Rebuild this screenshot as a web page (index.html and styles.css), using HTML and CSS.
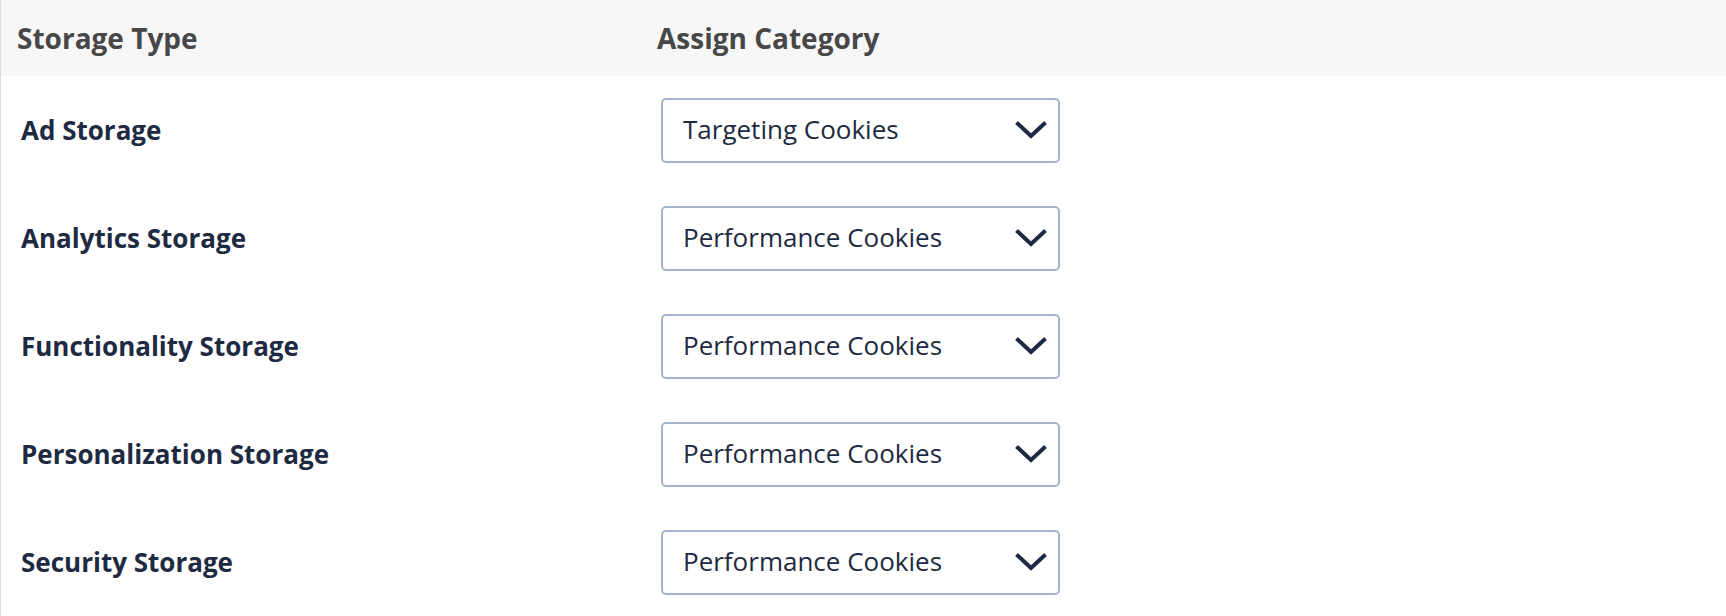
FILE: index.html
```html
<!DOCTYPE html>
<html lang="en">
<head>
    <meta charset="UTF-8">
    <meta name="viewport" content="width=device-width, initial-scale=1.0">
    <title>Storage Categories</title>
    <link rel="stylesheet" href="styles.css">
</head>
<body>
    <div class="storage-table">
        <!-- Header -->
        <div class="row head">
            <div class="cell">Storage Type</div>
            <div class="cell">Assign Category</div>
        </div>

        <div class="row">
            <div class="cell label">Ad Storage</div>
            <div class="cell">
                <div class="select">
                    <span>Targeting Cookies</span>
                    <svg width="34" height="19" viewBox="0 0 34 19"><polyline points="2.5,2.5 17,16 31.5,2.5" fill="none" stroke="#1e2a42" stroke-width="4"/></svg>
                </div>
            </div>
        </div>

        <div class="row">
            <div class="cell label">Analytics Storage</div>
            <div class="cell">
                <div class="select">
                    <span>Performance Cookies</span>
                    <svg width="34" height="19" viewBox="0 0 34 19"><polyline points="2.5,2.5 17,16 31.5,2.5" fill="none" stroke="#1e2a42" stroke-width="4"/></svg>
                </div>
            </div>
        </div>

        <div class="row">
            <div class="cell label">Functionality Storage</div>
            <div class="cell">
                <div class="select">
                    <span>Performance Cookies</span>
                    <svg width="34" height="19" viewBox="0 0 34 19"><polyline points="2.5,2.5 17,16 31.5,2.5" fill="none" stroke="#1e2a42" stroke-width="4"/></svg>
                </div>
            </div>
        </div>

        <div class="row">
            <div class="cell label">Personalization Storage</div>
            <div class="cell">
                <div class="select">
                    <span>Performance Cookies</span>
                    <svg width="34" height="19" viewBox="0 0 34 19"><polyline points="2.5,2.5 17,16 31.5,2.5" fill="none" stroke="#1e2a42" stroke-width="4"/></svg>
                </div>
            </div>
        </div>

        <div class="row">
            <div class="cell label">Security Storage</div>
            <div class="cell">
                <div class="select">
                    <span>Performance Cookies</span>
                    <svg width="34" height="19" viewBox="0 0 34 19"><polyline points="2.5,2.5 17,16 31.5,2.5" fill="none" stroke="#1e2a42" stroke-width="4"/></svg>
                </div>
            </div>
        </div>
    </div>
</body>
</html>
```

FILE: styles.css
```css
body {
    font-family: "Open Sans", Arial, sans-serif;
    margin: 0;
    background: #ffffff;
}
.storage-table {
    border-left: 1px solid #dcdcdc;
    height: 616px;
}
.row {
    display: grid;
    grid-template-columns: 640px 1fr;
    align-items: center;
    height: 108px;
}
.row.head {
    height: 76px;
    background: #f7f7f7;
}
.head .cell {
    padding: 0 16px;
    font-size: 28px;
    font-weight: 700;
    color: #474747;
}
.cell {
    padding: 0 20px;
}
.label {
    font-size: 26px;
    font-weight: 700;
    color: #1e2a42;
}
.select {
    display: flex;
    align-items: center;
    justify-content: space-between;
    width: 399px;
    height: 65px;
    box-sizing: border-box;
    padding: 0 10px 2px 20px;
    border: 2px solid #a3b5cc;
    border-radius: 5px;
    font-size: 26px;
    color: #1e2a42;
}
```
